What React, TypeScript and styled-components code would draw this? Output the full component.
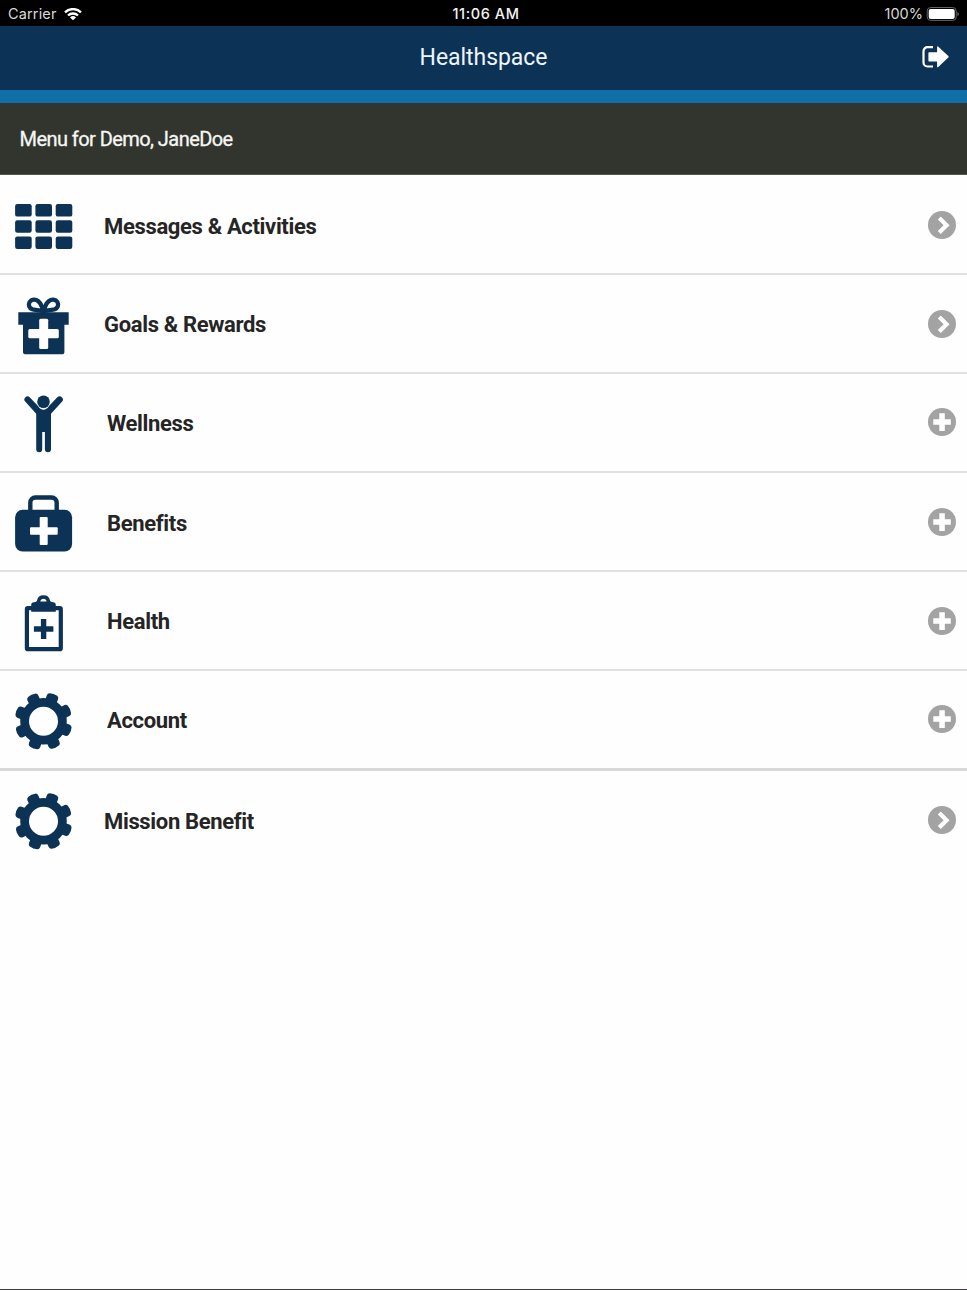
import React from "react";
import styled, { createGlobalStyle } from "styled-components";

const NAVY = "#0c3256";

const GlobalStyle = createGlobalStyle`
  *, *::before, *::after { box-sizing: border-box; }
  body { margin: 0; background: #fefefe; font-family: Roboto, "Liberation Sans", sans-serif; }
`;

const Screen = styled.div`
  display: flex;
  flex-direction: column;
  height: 1290px;
  background: #fefefe;
  border-bottom: 1px solid #3c3a3d;
  overflow: hidden;
`;

const StatusBar = styled.div`
  display: grid;
  grid-template-columns: 1fr auto 1fr;
  align-items: center;
  flex: none;
  height: 26px;
  padding: 1px 8px 0 8px;
  background: #000;
  color: #d8d8d8;
  font-family: Inter, "Liberation Sans", sans-serif;
  font-size: 14.5px;
  line-height: 26px;
`;

const Carrier = styled.div`
  display: flex;
  align-items: center;
  gap: 7px;
  letter-spacing: 0.15px;
`;

const Clock = styled.div`
  color: #f4f4f4;
  font-weight: 500;
  font-size: 14.5px;
  letter-spacing: 0.6px;
  padding-left: 5px;
`;

const Battery = styled.div`
  display: flex;
  align-items: center;
  justify-content: flex-end;
  gap: 3px;
`;

const Header = styled.header`
  display: grid;
  grid-template-columns: 1fr auto 1fr;
  align-items: center;
  flex: none;
  height: 77px;
  padding-right: 18px;
  padding-left: 18px;
  background: ${NAVY};
  border-bottom: 13px solid #106fa8;
`;

const Title = styled.h1`
  grid-column: 2;
  margin: 0;
  color: #eef5fb;
  font-size: 23px;
  font-weight: 400;
  line-height: 30px;
  letter-spacing: -0.05px;
`;

const LogoutButton = styled.button`
  display: flex;
  justify-self: end;
  padding: 0 0 2px;
  border: 0;
  background: none;
`;

const MenuHeading = styled.h2`
  flex: none;
  height: 72px;
  margin: 0;
  padding-left: 19.5px;
  background: #31352d;
  border-bottom: 1px solid #55584f;
  color: #f6f6f4;
  font-size: 20px;
  font-weight: 400;
  line-height: 72px;
  letter-spacing: -0.56px;
  -webkit-text-stroke: 0.3px #f6f6f4;
`;

const MenuList = styled.nav`
  display: flex;
  flex-direction: column;
`;

const MenuRow = styled.a<{ $height: number; $divider: number }>`
  display: flex;
  align-items: flex-start;
  height: ${(p) => p.$height}px;
  padding: 0 10px 0 14px;
  border-bottom: ${(p) => p.$divider}px solid ${(p) => (p.$divider > 2 ? "#d9d9d9" : "#e0e0e0")};
`;

const RowIcon = styled.svg`
  flex: none;
  width: 60px;
  height: 60px;
  margin-top: 21px;
  fill: ${NAVY};
`;

const RowLabel = styled.span<{ $indent: boolean; $top: number }>`
  flex: 1;
  margin-top: ${(p) => p.$top}px;
  margin-left: ${(p) => (p.$indent ? 33 : 30)}px;
  color: #252525;
  font-size: 22px;
  font-weight: 700;
  line-height: 30px;
  letter-spacing: -0.34px;
`;

const RowAction = styled.svg<{ $top: number }>`
  flex: none;
  width: 30px;
  height: 30px;
  margin-top: ${(p) => p.$top}px;
`;

const GridGlyph = () => (
  <>
    {[8, 24.2, 40.4].map((y) =>
      [1.1, 21.4, 41.7].map((x) => (
        <rect key={`${x}-${y}`} x={x} y={y} width="16.6" height="12.6" rx="2.2" />
      ))
    )}
  </>
);

const GiftGlyph = () => (
  <>
    <path
      d="M29.500 15.500C28.500 11.500 26.500 7.200 24.200 5.100C21.500 2.700 17.300 3.100 15.600 6C14 8.800 15.200 12 18.200 13.300C21.300 14.500 26 13.500 29.500 15.500C30.500 11.500 32.500 7.200 34.800 5.100C37.500 2.700 41.700 3.100 43.400 6C45 8.800 43.800 12 40.800 13.300C37.700 14.500 33 13.500 29.500 15.500Z"
      fill="none"
      stroke={NAVY}
      strokeWidth="4.300"
      strokeLinejoin="round"
    />
    <path d="M4.300 16.300h50.400v12.400h-4.300v27.600a2 2 0 0 1-2 2H11a2 2 0 0 1-2-2V28.700H4.300z" />
    <rect x="25.200" y="22.700" width="9" height="30.200" rx="1.500" fill="#fff" />
    <rect x="14.300" y="33.100" width="30.500" height="9.200" rx="1.500" fill="#fff" />
  </>
);

const PersonGlyph = () => (
  <>
    <circle cx="29.500" cy="6.800" r="6.300" />
    <path d="M11.400 6.800A2.950 2.950 0 0 1 15.700 2.300L24 11Q26.300 14.800 29.500 14.800Q32.700 14.800 35 11L43.300 2.300A2.950 2.950 0 0 1 47.900 6.800L37 18.800V54.300A3 3 0 0 1 30.900 54.300V37H28.200V54.300A3 3 0 0 1 22.200 54.300V18.800Z" />
  </>
);

const CaseGlyph = () => (
  <>
    <path d="M16.300 18V8.500a5 5 0 0 1 5-5h16.400a5 5 0 0 1 5 5V18" fill="none" stroke={NAVY} strokeWidth="4.400" />
    <rect x="1.100" y="15.800" width="57" height="41.600" rx="7.500" />
    <rect x="25.700" y="23" width="8" height="28" rx="1" fill="#fff" />
    <rect x="16" y="33.200" width="27.700" height="7.600" rx="1" fill="#fff" />
  </>
);

const ClipboardGlyph = () => (
  <>
    <rect x="12.900" y="15.200" width="33.900" height="41" rx="1" fill="none" stroke={NAVY} strokeWidth="4.200" />
    <path d="M17.200 18.700V12Q17.200 9.200 20 9.200Q22.800 9.200 23 7.600A6.600 6.400 0 0 1 36 7.600Q36.200 9.200 39 9.200Q41.800 9.200 41.800 12V18.700ZM26.300 8.600H32.700A3.300 3.700 0 0 0 26.300 8.600Z" fillRule="evenodd" />
    <rect x="26.900" y="26" width="5.400" height="20" rx=".5" />
    <rect x="19.900" y="33.200" width="19.500" height="5.500" rx=".5" />
  </>
);

const GearGlyph = () => (
  <g transform="translate(29.500 29.200)">
    <circle r="18.900" fill="none" stroke={NAVY} strokeWidth="8.800" />
    {[0, 1, 2, 3, 4, 5, 6, 7].map((i) => (
      <path
        key={i}
        transform={`rotate(${i * 45 + 20.5})`}
        d="M-5.800-20L-6-25.300Q-6-27.900-3.900-28.500Q0-29.700 3.900-28.500Q6-27.900 6-25.300L5.800-20Z"
      />
    ))}
  </g>
);

type Item = {
  label: string;
  glyph: React.FC;
  expandable: boolean;
  height: number;
  divider: number;
  top: number;
  actionTop: number;
};

const items: Item[] = [
  { label: "Messages & Activities", glyph: GridGlyph, expandable: false, height: 100, divider: 2, top: 37, actionTop: 34.5 },
  { label: "Goals & Rewards", glyph: GiftGlyph, expandable: false, height: 99, divider: 2, top: 35, actionTop: 33.5 },
  { label: "Wellness", glyph: PersonGlyph, expandable: true, height: 99, divider: 2, top: 35, actionTop: 33 },
  { label: "Benefits", glyph: CaseGlyph, expandable: true, height: 99, divider: 2, top: 36, actionTop: 33.5 },
  { label: "Health", glyph: ClipboardGlyph, expandable: true, height: 99, divider: 2, top: 35, actionTop: 33.5 },
  { label: "Account", glyph: GearGlyph, expandable: true, height: 100, divider: 3, top: 35, actionTop: 33 },
  { label: "Mission Benefit", glyph: GearGlyph, expandable: false, height: 99, divider: 0, top: 36, actionTop: 34 },
];

export default function App() {
  return (
    <Screen>
      <GlobalStyle />
      <StatusBar>
        <Carrier>
          Carrier
          <svg width="18" height="13" viewBox="0 0 18 13" fill="none" stroke="#fff" strokeWidth="2.300">
            <path d="M1 4.300a11.500 11.500 0 0 1 16 0M4 7.500a7.200 7.200 0 0 1 10 0" />
            <path d="M6 9.400a4.300 4.300 0 0 1 6 0L9 12.300z" fill="#fff" stroke="none" />
          </svg>
        </Carrier>
        <Clock>11:06 AM</Clock>
        <Battery>
          100%
          <svg width="33" height="15" viewBox="0 0 33 15">
            <rect x="1.200" y=".5" width="29" height="12.900" rx="3.500" fill="none" stroke="#666" strokeWidth="1" />
            <rect x="2.700" y="2" width="26" height="9.900" rx="2" fill="#fff" />
            <path d="M31.500 5q1.300.6 1.300 2t-1.300 2z" fill="#777" />
          </svg>
        </Battery>
      </StatusBar>
      <Header>
        <Title>Healthspace</Title>
        <LogoutButton aria-label="Log out">
          <svg width="28" height="24" viewBox="0 0 28 24">
            <path d="M12 2.200H6.500a4 4 0 0 0-4 4V17.500a4 4 0 0 0 4 4H12" fill="none" stroke="#fff" strokeWidth="2.200" />
            <path d="M8.200 7.300h7.900V2.200q0-1.500 1.200-.5l10 9.300q.8.800 0 1.600l-10 9.300q-1.200 1-1.200-.5V16.600H8.200q-.8 0-.8-.8V8.100q0-.8.8-.8z" fill="#fff" />
          </svg>
        </LogoutButton>
      </Header>
      <MenuHeading>Menu for Demo, JaneDoe</MenuHeading>
      <MenuList>
        {items.map(({ label, glyph: Glyph, expandable, height, divider, top, actionTop }) => (
          <MenuRow key={label} $height={height} $divider={divider}>
            <RowIcon viewBox="0 0 60 60">
              <Glyph />
            </RowIcon>
            <RowLabel $indent={expandable} $top={top}>{label}</RowLabel>
            <RowAction viewBox="0 0 30 30" $top={actionTop}>
              <circle cx="15" cy="15" r="14" fill="#a3a3a3" />
              {expandable ? (
                <path d="M12.300 6.200h5.500v6.100h6v5.500h-6v6.100h-5.500v-6.100h-6v-5.500h6z" fill="#fff" />
              ) : (
                <path d="M12.300 8l7.300 7.200l-7.300 7.300" fill="none" stroke="#fff" strokeWidth="4.200" />
              )}
            </RowAction>
          </MenuRow>
        ))}
      </MenuList>
    </Screen>
  );
}
